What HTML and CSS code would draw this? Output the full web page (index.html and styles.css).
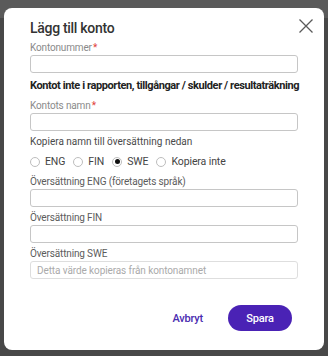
FILE: index.html
```html
<!DOCTYPE html>
<html lang="sv">
<head>
<meta charset="utf-8">
<title>Lägg till konto</title>
<link rel="stylesheet" href="styles.css">
</head>
<body>
<div class="modal">
  <div class="head">
    <h1 class="title">Lägg till konto</h1>
    <button class="close" aria-label="Stäng">
      <svg width="14" height="14" viewBox="0 0 14 14"><path d="M0.5 0.5 L13.5 13.5 M13.5 0.5 L0.5 13.5" stroke="#5a5a5a" stroke-width="1.3" fill="none"/></svg>
    </button>
  </div>
  <div class="field">
    <label class="lbl light">Kontonummer<span class="req">*</span></label>
    <div class="input"></div>
  </div>
  <div class="section">Kontot inte i rapporten, tillgångar / skulder / resultaträkning</div>
  <div class="field">
    <label class="lbl light">Kontots namn<span class="req">*</span></label>
    <div class="input"></div>
  </div>
  <div class="lbl dark copy">Kopiera namn till översättning nedan</div>
  <div class="radios">
    <span class="radio"><span class="dot"></span>ENG</span>
    <span class="radio"><span class="dot"></span>FIN</span>
    <span class="radio"><span class="dot on"></span>SWE</span>
    <span class="radio"><span class="dot"></span>Kopiera inte</span>
  </div>
  <div class="field">
    <label class="lbl">Översättning ENG (företagets språk)</label>
    <div class="input"></div>
  </div>
  <div class="field">
    <label class="lbl">Översättning FIN</label>
    <div class="input"></div>
  </div>
  <div class="field">
    <label class="lbl">Översättning SWE</label>
    <div class="input disabled"><span class="ph">Detta värde kopieras från kontonamnet</span></div>
  </div>
  <div class="footer">
    <button class="btn link">Avbryt</button>
    <button class="btn primary">Spara</button>
  </div>
</div>
</body>
</html>
```

FILE: styles.css
```css
* { box-sizing: border-box; }
html, body { margin: 0; padding: 0; }
body {
  width: 328px;
  height: 356px;
  overflow: hidden;
  background: linear-gradient(#5a5a5a 0, #5a5a5a 18px, #484848 18px);
  font-family: Roboto, "Liberation Sans", sans-serif;
  padding: 8px 4px 0 4px;
}
.modal {
  width: 320px;
  height: 342px;
  background: #fff;
  border-radius: 8px;
  padding: 10px 26px 0 26px;
  display: flex;
  flex-direction: column;
}
.head {
  display: flex;
  justify-content: space-between;
  align-items: flex-start;
  margin-right: -15px;
  height: 23px;
}
.title {
  margin: 0;
  font-size: 14px;
  font-weight: 500;
  color: #333;
  line-height: 20px;
  letter-spacing: -0.3px;
}
.close {
  border: 0;
  background: none;
  padding: 0;
  margin-top: 1px;
  width: 14px;
  height: 14px;
  display: flex;
}
.field { display: flex; flex-direction: column; margin-bottom: 4px; }
.lbl {
  font-size: 10px;
  line-height: 14px;
  color: #5c5c5c;
  letter-spacing: -0.15px;
}
.lbl.light { color: #8a8a8a; }
.lbl.dark { color: #4a4a4a; letter-spacing: 0; }
.req { color: #e0403a; margin-left: 1px; }
.input {
  height: 18px;
  border: 1px solid #c6c6c6;
  border-radius: 3px;
  background: #fff;
  display: flex;
  align-items: center;
  padding-left: 6px;
}
.input.disabled { border-color: #dedede; }
.ph { font-size: 10px; color: #aaa; letter-spacing: -0.1px; }
.section {
  font-size: 11px;
  font-weight: 700;
  color: #222;
  line-height: 16px;
  margin: 1px 0 5px 0;
  letter-spacing: -0.4px;
  white-space: nowrap;
}
.radios {
  display: flex;
  gap: 8px;
  height: 13px;
  margin: 6px 0 7px 0;
  align-items: center;
}
.radio {
  display: flex;
  align-items: center;
  gap: 5px;
  font-size: 10.5px;
  color: #444;
  letter-spacing: -0.1px;
}
.dot {
  width: 10px;
  height: 10px;
  border: 1px solid #bdbdbd;
  border-radius: 50%;
  display: flex;
  align-items: center;
  justify-content: center;
}
.dot.on::after {
  content: "";
  width: 5px;
  height: 5px;
  border-radius: 50%;
  background: #111;
}
.footer {
  display: flex;
  justify-content: flex-end;
  align-items: center;
  gap: 25px;
  margin-top: 22px;
  padding-right: 6px;
}
.btn {
  font-family: Roboto, "Liberation Sans", sans-serif;
  font-size: 11px;
  font-weight: 500;
  border: 0;
  cursor: pointer;
  letter-spacing: -0.2px;
}
.btn.link { background: none; color: #4a2cb0; padding: 0; }
.btn.primary {
  background: #4a22b5;
  color: #fff;
  width: 64px;
  height: 26px;
  border-radius: 13px;
}
```
